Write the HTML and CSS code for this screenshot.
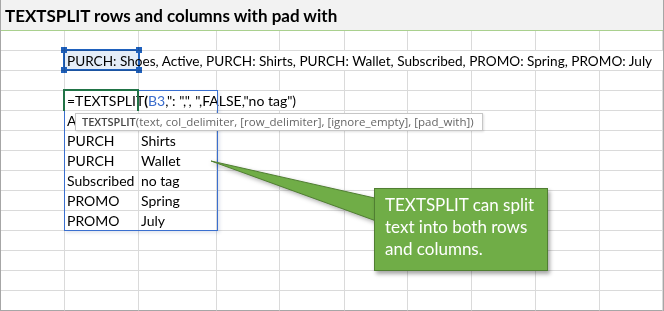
FILE: index.html
```html
<!DOCTYPE html>
<html lang="en">
<head>
    <meta charset="UTF-8">
    <title>TEXTSPLIT rows and columns with pad with</title>
    <link rel="stylesheet" href="styles.css">
</head>
<body>
    <div class="frame">
        <div class="title">TEXTSPLIT rows and columns with pad with</div>
        <div class="sheet">
            <!-- row 1 -->
            <div class="c"></div><div class="c"></div><div class="c"></div><div class="c"></div><div class="c"></div><div class="c"></div><div class="c"></div><div class="c"></div><div class="c"></div><div class="c"></div>
            <!-- row 2: source text -->
            <div class="c"></div><div class="c span-9 source">PURCH: Shoes, Active, PURCH: Shirts, PURCH: Wallet, Subscribed, PROMO: Spring, PROMO: July</div>
            <!-- row 3 -->
            <div class="c"></div><div class="c"></div><div class="c"></div><div class="c"></div><div class="c"></div><div class="c"></div><div class="c"></div><div class="c"></div><div class="c"></div><div class="c"></div>
            <!-- row 4: formula being edited -->
            <div class="c"></div><div class="c span-4 formula">=TEXTSPLIT<b>(</b><span class="ref">B3</span>,": ",", ",FALSE,"no tag")</div><div class="c"></div><div class="c"></div><div class="c"></div><div class="c"></div><div class="c"></div>
            <!-- row 5 -->
            <div class="c"></div><div class="c">Active</div><div class="c">no tag</div><div class="c"></div><div class="c"></div><div class="c"></div><div class="c"></div><div class="c"></div><div class="c"></div><div class="c"></div>
            <!-- row 6 -->
            <div class="c"></div><div class="c">PURCH</div><div class="c">Shirts</div><div class="c"></div><div class="c"></div><div class="c"></div><div class="c"></div><div class="c"></div><div class="c"></div><div class="c"></div>
            <!-- row 7 -->
            <div class="c"></div><div class="c">PURCH</div><div class="c">Wallet</div><div class="c"></div><div class="c"></div><div class="c"></div><div class="c"></div><div class="c"></div><div class="c"></div><div class="c"></div>
            <!-- row 8 -->
            <div class="c"></div><div class="c">Subscribed</div><div class="c">no tag</div><div class="c"></div><div class="c"></div><div class="c"></div><div class="c"></div><div class="c"></div><div class="c"></div><div class="c"></div>
            <!-- row 9 -->
            <div class="c"></div><div class="c">PROMO</div><div class="c">Spring</div><div class="c"></div><div class="c"></div><div class="c"></div><div class="c"></div><div class="c"></div><div class="c"></div><div class="c"></div>
            <!-- row 10 -->
            <div class="c"></div><div class="c">PROMO</div><div class="c">July</div><div class="c"></div><div class="c"></div><div class="c"></div><div class="c"></div><div class="c"></div><div class="c"></div><div class="c"></div>
            <!-- rows 11-14 -->
            <div class="c"></div><div class="c"></div><div class="c"></div><div class="c"></div><div class="c"></div><div class="c"></div><div class="c"></div><div class="c"></div><div class="c"></div><div class="c"></div>
            <div class="c"></div><div class="c"></div><div class="c"></div><div class="c"></div><div class="c"></div><div class="c"></div><div class="c"></div><div class="c"></div><div class="c"></div><div class="c"></div>
            <div class="c"></div><div class="c"></div><div class="c"></div><div class="c"></div><div class="c"></div><div class="c"></div><div class="c"></div><div class="c"></div><div class="c"></div><div class="c"></div>
            <div class="c"></div><div class="c"></div><div class="c"></div><div class="c"></div><div class="c"></div><div class="c"></div><div class="c"></div><div class="c"></div><div class="c"></div><div class="c"></div>
        </div>

        <!-- overlays -->
        <div class="ref-box">
            <span class="handle tl"></span><span class="handle tr"></span>
            <span class="handle bl"></span><span class="handle br"></span>
        </div>
        <div class="spill-box"></div>
        <div class="edit-box"></div>
        <div class="tooltip"><b>TEXTSPLIT</b>(text, col_delimiter, [row_delimiter], [ignore_empty], [pad_with])</div>

        <svg class="pointer" width="664" height="311" viewBox="0 0 664 311">
            <polygon points="210,162 378,200 378,223" fill="#70ad47" stroke="#507e32" stroke-width="1"/>
        </svg>
        <div class="callout">TEXTSPLIT can split text into both rows and columns.</div>
    </div>
</body>
</html>
```

FILE: styles.css
```css
body {
    margin: 0;
    background-color: #ffffff;
}
.frame {
    position: relative;
    width: 662px;
    border-left: 1px solid #a6a6a6;
    border-right: 1px solid #a6a6a6;
    overflow: hidden;
    font-family: Lato, 'Open Sans', sans-serif;
    color: #000;
}
.title {
    height: 30px;
    line-height: 31px;
    padding-left: 4px;
    background-color: #f2f2f2;
    border-bottom: 1px solid #a9d08e;
    font-size: 17px;
    font-weight: bold;
    white-space: nowrap;
}
.sheet {
    display: grid;
    grid-template-columns: 64px 74px 78px 63px 65px 63px 64px 64px 64px 63px;
    grid-auto-rows: 20px;
}
.c {
    box-sizing: border-box;
    border-right: 1px solid #dadada;
    border-bottom: 1px solid #dadada;
    padding: 0 2px;
    font-size: 14px;
    line-height: 20px;
    white-space: nowrap;
    overflow: hidden;
}
.sheet > .c:nth-last-child(-n+10) {
    border-bottom-color: #a6a6a6;
}
.span-9 {
    grid-column: span 9;
    border-right: none;
}
.span-4 {
    grid-column: span 4;
}
.source {
    font-size: 13.6px;
}
.formula {
    background-color: #ffffff;
}
.formula b {
    font-weight: bold;
}
.ref {
    color: #3a6ccc;
}

/* reference highlight on the source cell */
.ref-box {
    position: absolute;
    left: 62px;
    top: 49px;
    width: 73px;
    height: 18px;
    border: 2px solid #1f61bd;
    background-color: #e4edf8;
    mix-blend-mode: multiply;
}
.handle {
    position: absolute;
    width: 6px;
    height: 6px;
    background-color: #1f61bd;
}
.handle.tl { left: -4px; top: -4px; }
.handle.tr { right: -4px; top: -4px; }
.handle.bl { left: -4px; bottom: -4px; }
.handle.br { right: -4px; bottom: -4px; }

.spill-box {
    position: absolute;
    left: 63px;
    top: 90px;
    width: 152px;
    height: 139px;
    border: 1px solid #3a6fcf;
    box-shadow: 2px 2px 3px rgba(60, 90, 140, 0.15);
}
.edit-box {
    position: absolute;
    left: 62px;
    top: 89px;
    width: 72px;
    height: 20px;
    border: 2px solid #217346;
    border-bottom: none;
}
.tooltip {
    position: absolute;
    left: 74px;
    top: 113px;
    width: 400px;
    height: 16px;
    padding-left: 6px;
    background-color: #ffffff;
    border: 1px solid #c6c6c6;
    box-shadow: 1px 1px 2px rgba(0, 0, 0, 0.12);
    font-family: 'Open Sans', sans-serif;
    font-size: 11.5px;
    line-height: 16px;
    color: #666666;
    white-space: nowrap;
}
.tooltip b {
    color: #444444;
    font-weight: 600;
    font-size: 11px;
}
.pointer {
    position: absolute;
    left: 0;
    top: -1px;
    filter: drop-shadow(1px 2px 2px rgba(0, 0, 0, 0.3));
}
.callout {
    position: absolute;
    left: 373px;
    top: 188px;
    width: 152px;
    height: 70px;
    padding: 5px 10px 6px 10px;
    background-color: #70ad47;
    border: 1px solid #507e32;
    box-shadow: 2px 3px 4px rgba(0, 0, 0, 0.35);
    color: #ffffff;
    font-size: 17px;
    line-height: 22px;
}
```
